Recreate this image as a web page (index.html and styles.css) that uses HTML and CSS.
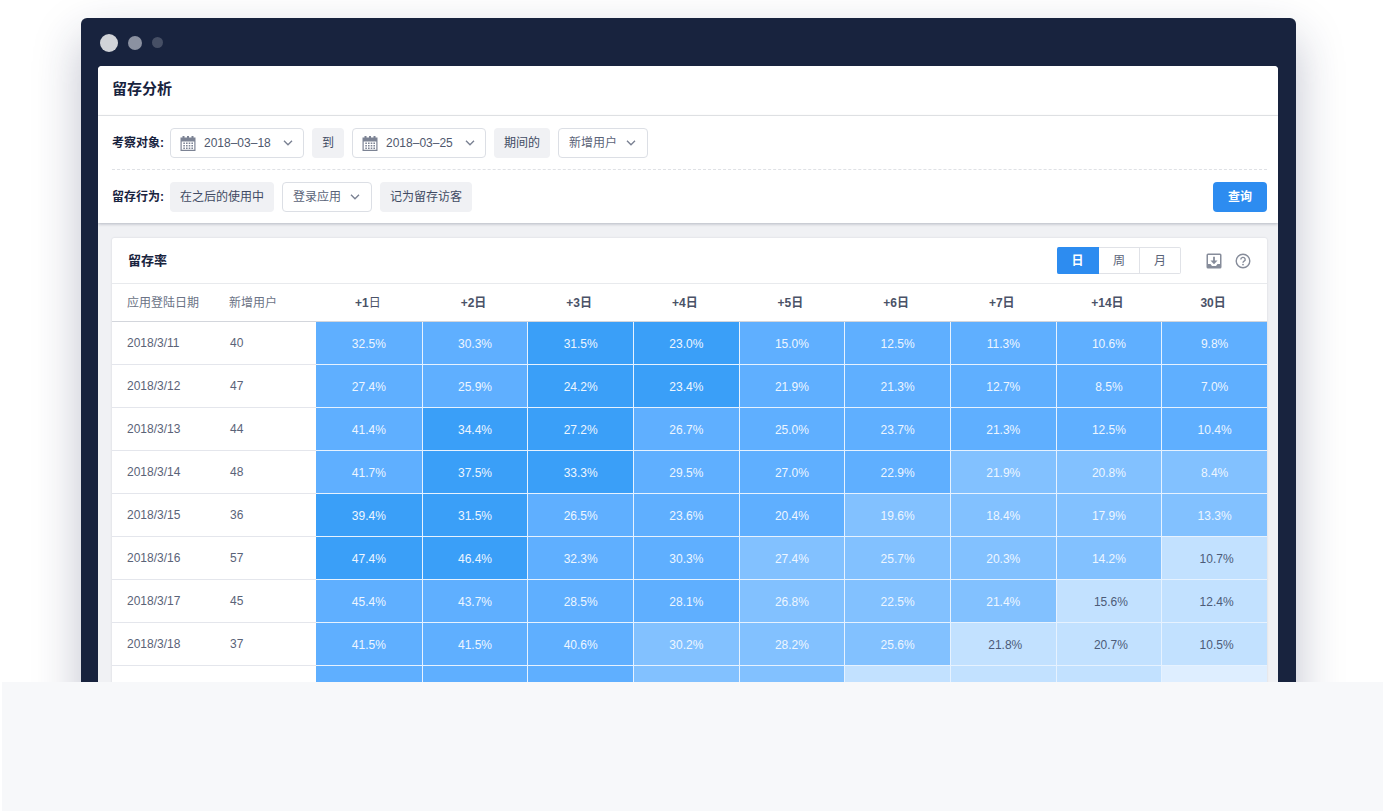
FILE: index.html
```html
<!DOCTYPE html>
<html lang="zh-CN">
<head>
<meta charset="utf-8">
<title>留存分析</title>
<link rel="stylesheet" href="styles.css">
</head>
<body>
<svg class="sprite" aria-hidden="true">
  <symbol id="calendar" viewBox="0 0 16 15">
    <path fill="currentColor" fill-rule="evenodd" d="M.500 1.500H2.500V0h2v1.500h2.500V0h2v1.500h2.500V0h2v1.500h2V15H.500zM1.700 5.500v8.300h12.600V5.500z"/>
    <path fill="currentColor" d="M6 6.500h1.600V8H6zM8.700 6.500h1.600V8H8.700zM11.400 6.500H13V8h-1.600zM3.300 9h1.600v1.500H3.300zM6 9h1.600v1.500H6zM8.700 9h1.600v1.500H8.700zM11.400 9H13v1.500h-1.600zM3.300 11.500h1.600v1.500H3.300zM6 11.500h1.600v1.500H6zM8.700 11.500h1.600v1.500H8.700zM11.400 11.500H13v1.500h-1.600zM3.300 6.500h1.600V8H3.300z"/>
  </symbol>
  <symbol id="chevron" viewBox="0 0 10 6">
    <path fill="none" stroke="currentColor" stroke-width="1.400" d="M1 .8l4 4 4-4"/>
  </symbol>
</svg>
<main class="stage">
  <div class="window">
    <div class="dots"><span class="dot dot-large"></span><span class="dot dot-medium"></span><span class="dot dot-small"></span></div>
    <div class="screen">
      <header class="page-head"><h1>留存分析</h1></header>
      <form class="filters">
        <div class="filter-row">
          <span class="filter-label">考察对象:</span>
          <button type="button" class="date" aria-haspopup="dialog" aria-label="开始日期 2018–03–18"><svg class="calendar"><use href="#calendar"/></svg><span>2018–03–18</span><svg class="chevron"><use href="#chevron"/></svg></button>
          <span class="tag">到</span>
          <button type="button" class="date" aria-haspopup="dialog" aria-label="结束日期 2018–03–25"><svg class="calendar"><use href="#calendar"/></svg><span>2018–03–25</span><svg class="chevron"><use href="#chevron"/></svg></button>
          <span class="tag">期间的</span>
          <span class="select"><select aria-label="考察对象"><option>新增用户</option></select><svg class="chevron"><use href="#chevron"/></svg></span>
        </div>
        <div class="filter-row">
          <span class="filter-label">留存行为:</span>
          <span class="tag">在之后的使用中</span>
          <span class="select"><select aria-label="留存行为"><option>登录应用</option></select><svg class="chevron"><use href="#chevron"/></svg></span>
          <span class="tag">记为留存访客</span>
          <button type="submit" class="query">查询</button>
        </div>
      </form>
      <section class="card">
        <div class="card-head">
          <h2>留存率</h2>
          <div class="periods">
            <button type="button" class="period active" aria-pressed="true">日</button>
            <button type="button" class="period" aria-pressed="false">周</button>
            <button type="button" class="period" aria-pressed="false">月</button>
          </div>
          <button type="button" class="icon-button" aria-label="下载">
            <svg viewBox="0 0 16 16"><path fill="currentColor" fill-rule="evenodd" d="M2 .5h12A1.500 1.500 0 0 1 15.500 2v12a1.500 1.500 0 0 1-1.500 1.500H2A1.500 1.500 0 0 1 .5 14V2A1.500 1.500 0 0 1 2 .5zM2 2v9h2.500l1.500 2h4l1.500-2H14V2z"/><path fill="none" stroke="currentColor" stroke-width="1.800" d="M8 3.800v6.200"/><path fill="currentColor" d="M4.500 7.500h7L8 11.200z"/></svg>
          </button>
          <button type="button" class="icon-button" aria-label="帮助">
            <svg viewBox="0 0 16 16"><g fill="none" stroke="currentColor" stroke-width="1.400"><circle cx="8" cy="8" r="6.800"/><path d="M5.800 6.400a2.200 2 0 1 1 3.300 1.700Q8 8.700 8 9.800"/></g><circle cx="8" cy="11.600" r=".9" fill="currentColor"/></svg>
          </button>
        </div>
        <table>
          <colgroup><col class="col-date"><col class="col-users"><col span="9"></colgroup>
          <thead>
            <tr><th class="plain">应用登陆日期</th><th class="plain">新增用户</th><th>+1<span class="unit">日</span></th><th>+2日</th><th>+3日</th><th>+4日</th><th>+5日</th><th>+6日</th><th>+7日</th><th>+14日</th><th>30日</th></tr>
          </thead>
          <tbody>
            <tr><td>2018/3/11</td><td>40</td><td class="h3">32.5%</td><td class="h3">30.3%</td><td class="h4">31.5%</td><td class="h4">23.0%</td><td class="h3">15.0%</td><td class="h3">12.5%</td><td class="h3">11.3%</td><td class="h3">10.6%</td><td class="h3">9.8%</td></tr>
            <tr><td>2018/3/12</td><td>47</td><td class="h3">27.4%</td><td class="h3">25.9%</td><td class="h4">24.2%</td><td class="h4">23.4%</td><td class="h3">21.9%</td><td class="h3">21.3%</td><td class="h3">12.7%</td><td class="h3">8.5%</td><td class="h3">7.0%</td></tr>
            <tr><td>2018/3/13</td><td>44</td><td class="h3">41.4%</td><td class="h4">34.4%</td><td class="h4">27.2%</td><td class="h3">26.7%</td><td class="h3">25.0%</td><td class="h3">23.7%</td><td class="h3">21.3%</td><td class="h3">12.5%</td><td class="h3">10.4%</td></tr>
            <tr><td>2018/3/14</td><td>48</td><td class="h3">41.7%</td><td class="h4">37.5%</td><td class="h4">33.3%</td><td class="h3">29.5%</td><td class="h3">27.0%</td><td class="h3">22.9%</td><td class="h2">21.9%</td><td class="h2">20.8%</td><td class="h2">8.4%</td></tr>
            <tr><td>2018/3/15</td><td>36</td><td class="h4">39.4%</td><td class="h4">31.5%</td><td class="h3">26.5%</td><td class="h3">23.6%</td><td class="h3">20.4%</td><td class="h2">19.6%</td><td class="h2">18.4%</td><td class="h2">17.9%</td><td class="h2">13.3%</td></tr>
            <tr><td>2018/3/16</td><td>57</td><td class="h4">47.4%</td><td class="h4">46.4%</td><td class="h3">32.3%</td><td class="h3">30.3%</td><td class="h2">27.4%</td><td class="h2">25.7%</td><td class="h2">20.3%</td><td class="h2">14.2%</td><td class="h1">10.7%</td></tr>
            <tr><td>2018/3/17</td><td>45</td><td class="h3">45.4%</td><td class="h3">43.7%</td><td class="h3">28.5%</td><td class="h3">28.1%</td><td class="h2">26.8%</td><td class="h2">22.5%</td><td class="h2">21.4%</td><td class="h1">15.6%</td><td class="h1">12.4%</td></tr>
            <tr><td>2018/3/18</td><td>37</td><td class="h3">41.5%</td><td class="h3">41.5%</td><td class="h3">40.6%</td><td class="h2">30.2%</td><td class="h2">28.2%</td><td class="h2">25.6%</td><td class="h1">21.8%</td><td class="h1">20.7%</td><td class="h1">10.5%</td></tr>
            <tr><td></td><td></td><td class="h3"></td><td class="h3"></td><td class="h3"></td><td class="h2"></td><td class="h2"></td><td class="h1"></td><td class="h1"></td><td class="h1"></td><td class="h0"></td></tr>
          </tbody>
        </table>
      </section>
    </div>
  </div>
</main>
<div class="band"></div>
</body>
</html>
```
FILE: styles.css
```css
* { box-sizing: border-box; }

body {
  margin: 0;
  min-height: 100vh;
  display: flex;
  flex-direction: column;
  background: #fff;
  color: #5a6378;
  font-family: "Liberation Sans", "Noto Sans CJK SC", sans-serif;
  font-size: 12px;
  line-height: 18px;
}

h1, h2 { margin: 0; color: #18233e; }
button, select { font: inherit; color: inherit; }
.sprite { position: absolute; width: 0; height: 0; }

.stage {
  height: 84vh;
  padding: 18px 88px 0 81px;
  overflow: hidden;
}

.window {
  padding: 0 18px 18px 17px;
  border-radius: 6px;
  background: #18233e;
  box-shadow: 0 20px 48px rgba(30, 36, 80, 0.28);
}

.dots {
  display: flex;
  align-items: center;
  gap: 10px;
  height: 48px;
  padding: 1px 2px 0;
}
.dot { border-radius: 50%; }
.dot-large { width: 18px; height: 18px; background: #d1d3d8; }
.dot-medium { width: 14px; height: 14px; background: #8b91a1; }
.dot-small { width: 11px; height: 11px; background: #464f65; }

.screen {
  border-radius: 4px;
  overflow: hidden;
  background: #f0f1f4;
}

.page-head {
  padding: 10px 14px 14px;
  border-bottom: 1px solid #e8eaed;
  background: #fff;
}
h1 { font-size: 15px; line-height: 25px; }

.filters {
  padding: 0 11px 0 14px;
  background: #fff;
  box-shadow: 0 1px 3px rgba(24, 35, 62, 0.28);
}
.filter-row {
  display: flex;
  align-items: center;
  gap: 8px;
  padding: 12px 0 11px;
}
.filter-row + .filter-row { border-top: 1px dashed #dfe1e5; }
.filter-label {
  width: 50px;
  white-space: nowrap;
  font-weight: bold;
  color: #18233e;
}

.tag {
  height: 30px;
  padding: 0 10px;
  border-radius: 4px;
  background: #f0f1f4;
  color: #414b63;
  line-height: 30px;
}
.date, .select {
  display: flex;
  align-items: center;
  height: 30px;
  border: 1px solid #dcdfe5;
  border-radius: 4px;
  background: #fff;
}
.date { width: 134px; padding: 0 10px 0 9px; gap: 8px; color: #4f586e; }
.date .chevron { margin-left: auto; }
.calendar { width: 16px; height: 15px; color: #7c8394; }
.chevron { width: 10px; height: 6px; color: #7c8394; }
.select { position: relative; width: 90px; }
.select select {
  appearance: none;
  width: 100%;
  height: 100%;
  padding: 0 24px 0 10px;
  border: 0;
  background: transparent;
}
.select .chevron { position: absolute; right: 11px; pointer-events: none; }

.query {
  width: 54px;
  height: 30px;
  margin-left: auto;
  border: 0;
  border-radius: 4px;
  background: #2d8cf0;
  color: #fff;
  font-weight: bold;
}

.card {
  margin: 15px 11px 0 14px;
  border-radius: 2px;
  background: #fff;
  box-shadow: 0 0 2px rgba(24, 35, 62, 0.16);
}
.card-head {
  display: flex;
  align-items: center;
  height: 45px;
  padding: 0 16px;
}
h2 { margin-right: auto; font-size: 13px; }

.periods { display: flex; margin-right: 25px; }
.period {
  width: 41px;
  height: 27px;
  padding: 0;
  border: 1px solid #e0e2e7;
  border-left-width: 0;
  background: #fff;
}
.period:first-child { width: 42px; border-radius: 2px 0 0 2px; }
.period:last-child { border-radius: 0 2px 2px 0; }
.period.active { border-color: #2d8cf0; background: #2d8cf0; color: #fff; font-weight: bold; }

.icon-button {
  display: flex;
  padding: 0;
  border: 0;
  background: none;
  color: #868c9a;
}
.icon-button svg { width: 16px; height: 16px; }
.icon-button + .icon-button { margin-left: 13px; }

table { width: 100%; table-layout: fixed; border-collapse: separate; border-spacing: 0; }
.col-date, .col-users { width: 102px; }
th {
  height: 39px;
  padding: 0 2px 0 0;
  border-top: 1px solid #e8eaed;
  border-bottom: 1px solid #d3d6dc;
  color: #4a5267;
  text-align: center;
}
th.plain { padding: 0 0 0 15px; font-weight: normal; text-align: left; white-space: nowrap; color: #6b7386; }
.unit { font-weight: normal; }
td { height: 43px; padding: 0 0 0 15px; border-bottom: 1px solid #e4e6ec; }
td + td { padding-left: 16px; }

.h0, .h1, .h2, .h3, .h4 {
  border-left: 1px solid #e6f2ff;
  border-bottom-color: #e6f2ff;
  color: #edf6ff;
  text-align: center;
}
td[class] { padding: 2px 0 0; }
td.h1 { padding-left: 4px; }
td:nth-child(3) { border-left: 0; }
.h4 { background: #3a9ff8; }
.h3 { background: #5fafff; }
.h2 { background: #82c1ff; }
.h1 { background: #c2e1ff; color: #4c5b78; }
.h0 { background: #deeeff; color: #4c5b78; }

.band { flex: 1; margin: 0 1px 1px 2px; background: #f7f8fa; }
```
